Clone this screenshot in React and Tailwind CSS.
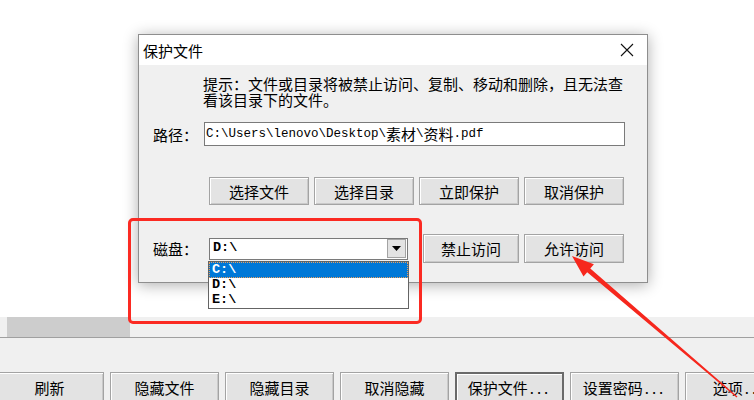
import React from "react";

const cjk = { fontFamily: '"Noto Sans CJK SC", "Noto Sans", sans-serif' };
const mono = { fontFamily: '"Liberation Mono", "Noto Sans CJK SC", monospace' };

function Btn({ children, className = "", def = false }) {
  return (
    <div
      className={
        "flex items-center justify-center shrink-0 text-[15px] leading-none text-black bg-[#e3e3e3] " +
        (def
          ? "border-2 border-[#6a6a6a] shadow-[inset_1px_1px_0_#ffffff]"
          : "border border-[#a3a3a3] shadow-[inset_1px_1px_0_#ffffff,inset_-1px_-1px_0_#c9c9c9]") +
        " " +
        className
      }
    >
      {children}
    </div>
  );
}

export default function App() {
  return (
    <div className="relative w-[754px] h-[400px] overflow-hidden bg-white flex flex-col" style={cjk}>
      {/* white workspace */}
      <div className="h-[317px] shrink-0" />
      {/* scroll band */}
      <div className="h-[20px] shrink-0 bg-[#f0f0f0] pl-[7px] flex">
        <div className="w-[123px] bg-[#cdcdcd]" />
      </div>
      <div className="h-px shrink-0 bg-[#a0a0a0]" />
      {/* bottom toolbar */}
      <div className="flex-1 bg-[#f0f0f0] pt-[34px] flex gap-[6px] -ml-[5px]">
        <Btn className="w-[109px] h-[30px]">刷新</Btn>
        <Btn className="w-[109px] h-[30px]">隐藏文件</Btn>
        <Btn className="w-[109px] h-[30px]">隐藏目录</Btn>
        <Btn className="w-[109px] h-[30px]">取消隐藏</Btn>
        <Btn def className="w-[109px] h-[30px]">
          保护文件<span className="tracking-[3px] ml-[2px]">...</span>
        </Btn>
        <Btn className="w-[109px] h-[30px]">
          设置密码<span className="tracking-[3px] ml-[2px]">...</span>
        </Btn>
        <Btn className="w-[109px] h-[30px]">
          选项<span className="tracking-[3px] ml-[2px]">...</span>
        </Btn>
      </div>

      {/* dialog window */}
      <div className="absolute left-[138px] top-[34px] w-[510px] h-[249px] border border-[#8e8e8e] bg-[#f0f0f0] shadow-[0_2px_14px_rgba(0,0,0,0.32)] flex flex-col">
        <div className="h-[30px] shrink-0 bg-white flex items-center justify-between pl-[4px] pr-[13px]">
          <span className="text-[15px] leading-none text-black">保护文件</span>
          <svg width="14" height="14" viewBox="0 0 14 14">
            <path d="M1 1L13 13M13 1L1 13" stroke="#111" strokeWidth="1.1" />
          </svg>
        </div>
        <div className="flex flex-col">
          <div className="ml-[64px] mt-[11px] w-[424px] text-[15px] leading-[16px] text-black">
            提示：文件或目录将被禁止访问、复制、移动和删除，且无法查看该目录下的文件。
          </div>
          <div className="mt-[14px] pl-[14px] flex items-center">
            <span className="w-[51px] text-[15px] leading-none text-black">路径：</span>
            <div className="w-[421px] h-[24px] bg-white border border-[#7a7a7a] flex items-center pl-[1px] text-[12.5px] text-black" style={mono}>
              C:\Users\lenovo\Desktop\<span className="text-[15px]" style={cjk}>素材</span>\<span className="text-[15px]" style={cjk}>资料</span>.pdf
            </div>
          </div>
          <div className="mt-[31px] pl-[70px] flex gap-[5px]">
            <Btn className="w-[100px] h-[28px]">选择文件</Btn>
            <Btn className="w-[100px] h-[28px]">选择目录</Btn>
            <Btn className="w-[100px] h-[28px]">立即保护</Btn>
            <Btn className="w-[100px] h-[28px]">取消保护</Btn>
          </div>
          <div className="mt-[29px] pl-[14px] flex items-center">
            <span className="w-[56px] text-[15px] leading-none text-black">磁盘：</span>
            <div className="relative w-[199px] h-[22px] bg-white border border-[#7a7a7a] flex items-center">
              <span className="pl-[3px] text-[13.5px] font-bold text-black flex-1" style={mono}>D:\</span>
              <div className="w-[19px] h-[19px] mr-[1px] bg-[#e3e3e3] border border-[#a3a3a3] flex items-center justify-center">
                <svg width="9" height="5" viewBox="0 0 9 5"><path d="M0 0H9L4.5 5Z" fill="#000" /></svg>
              </div>
              {/* dropdown list */}
              <div className="absolute left-[-2px] top-[22px] w-[201px] h-[48px] bg-white border border-[#646464] flex flex-col text-[13.5px] font-bold leading-none" style={mono}>
                <div className="h-[16px] bg-[#0078d7] text-white border border-dotted border-[#e8a060] flex items-center pl-[2px]">C:\</div>
                <div className="h-[15px] flex items-center pl-[3px] text-black">D:\</div>
                <div className="h-[15px] flex items-center pl-[3px] text-black">E:\</div>
              </div>
            </div>
            <Btn className="ml-[15px] w-[96px] h-[29px]">禁止访问</Btn>
            <Btn className="ml-[5px] w-[100px] h-[29px]">允许访问</Btn>
          </div>
        </div>
      </div>

      {/* red annotation box */}
      <div className="absolute left-[128px] top-[218px] w-[294px] h-[106px] border-[3px] border-[#fb2a22] rounded-[5px]" />

      {/* red arrow */}
      <svg className="absolute left-0 top-0" width="754" height="400" viewBox="0 0 754 400">
        <polygon points="572,256 583.5,276.4 587.2,272.2 736.6,397.6 737.4,396.4 590.3,268.4 593.9,264.2" fill="#f6271d" />
      </svg>
    </div>
  );
}
